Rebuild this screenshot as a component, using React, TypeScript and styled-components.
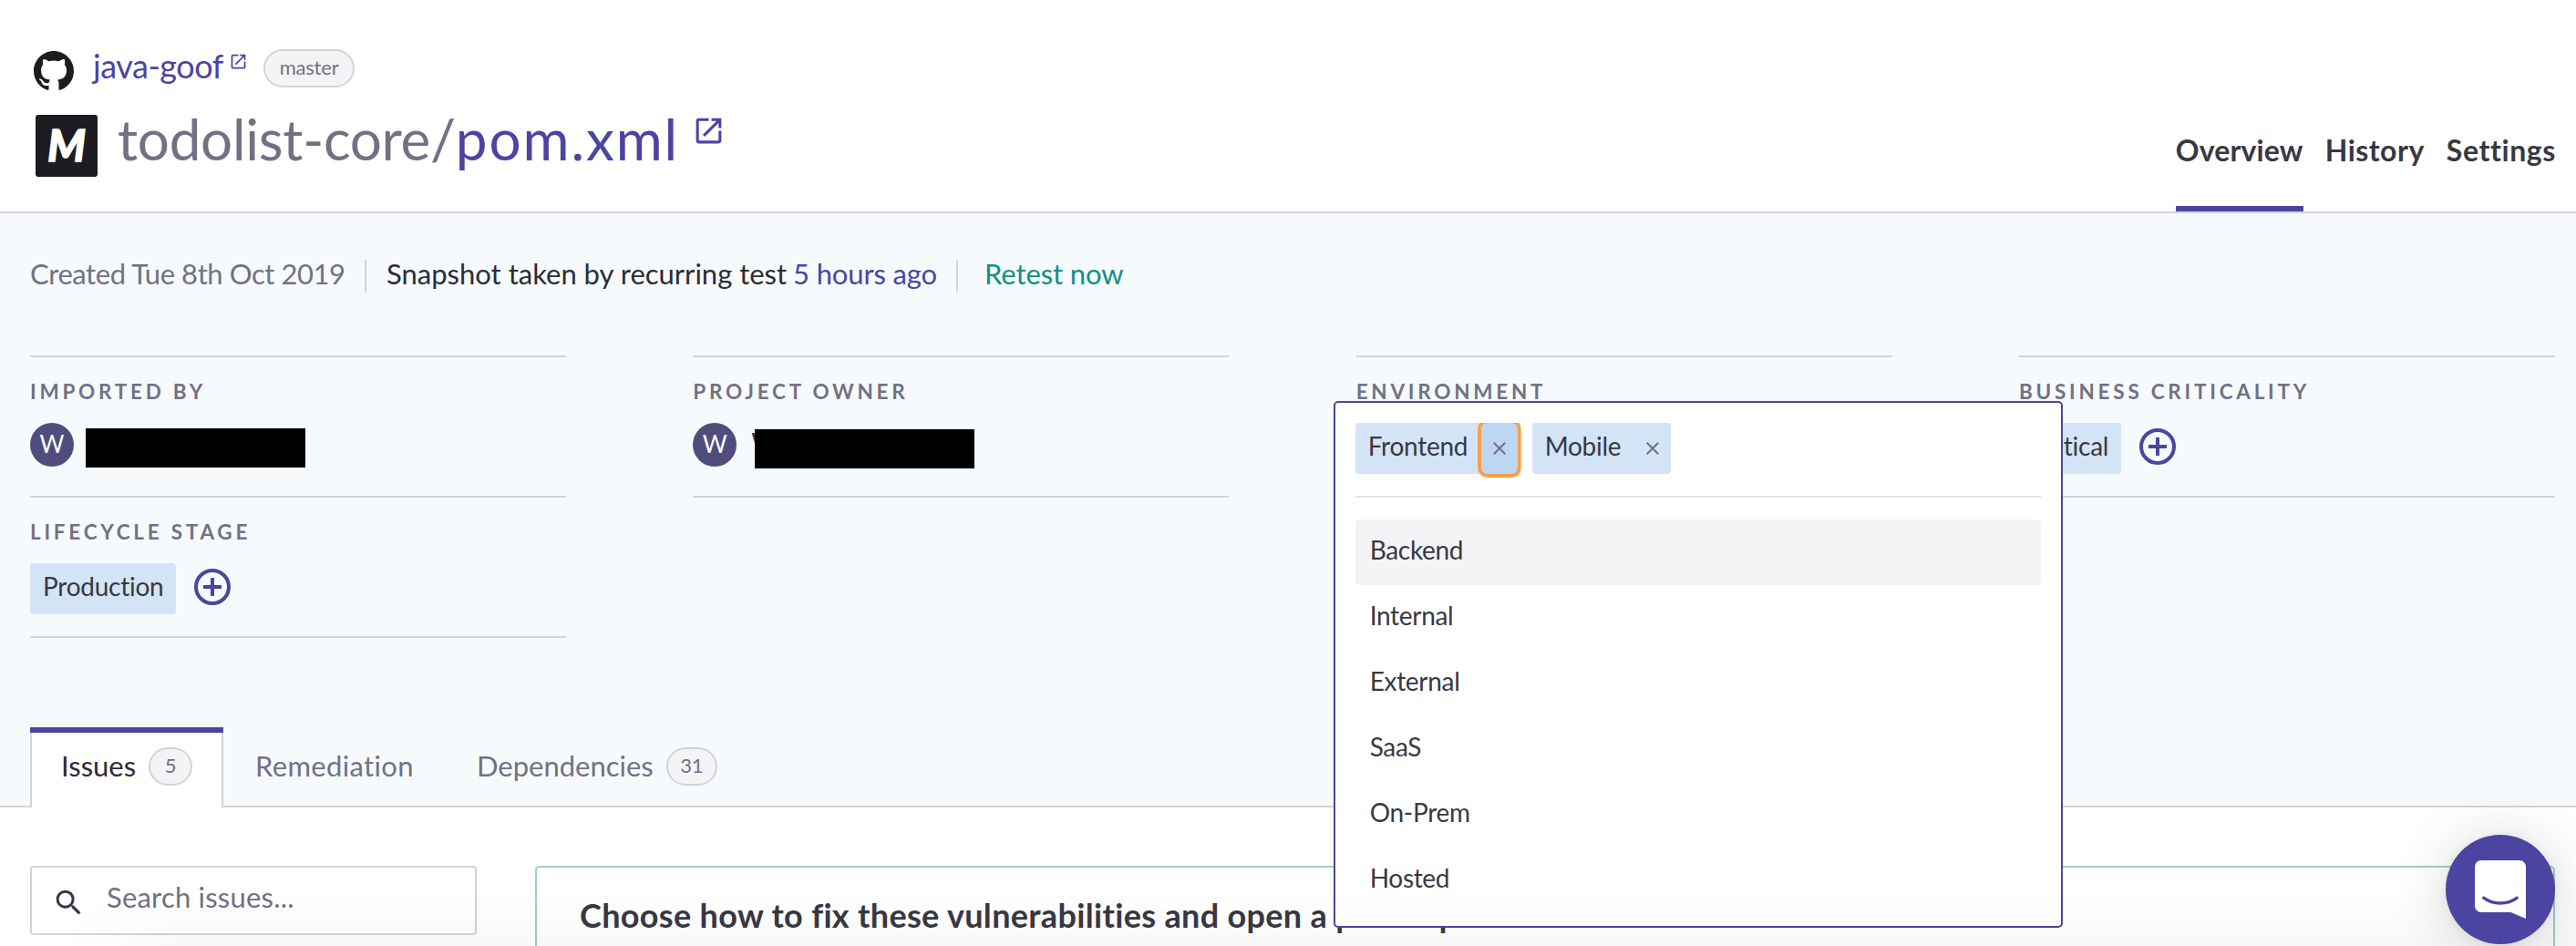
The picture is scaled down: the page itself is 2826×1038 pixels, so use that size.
import React from "react";
import styled, { createGlobalStyle } from "styled-components";
import { MdOpenInNew, MdSearch } from "react-icons/md";

const color = {
  brand: "#4b45a1",
  ink: "#393842",
  muted: "#727184",
  line: "#d3d3d9",
  panel: "#f6fafd",
  chip: "#d3e4f6",
  teal: "#0f8f87",
};

const GlobalStyle = createGlobalStyle`
  *, *::before, *::after { box-sizing: border-box; }
  html, body { margin: 0; background: #fff; }
  body { font-family: Lato, "Open Sans", sans-serif; color: ${color.ink}; }
`;

const Page = styled.div`
  position: relative;
  display: flex;
  flex-direction: column;
  height: 1038px;
  overflow: hidden;
  background: #fff;
`;

/* ---------- header ---------- */

const Header = styled.header`
  display: flex;
  justify-content: space-between;
  flex: none;
  height: 234px;
  padding: 54px 22px 0 37px;
  border-bottom: 2px solid ${color.line};
`;

const Titles = styled.div`
  display: flex;
  flex-direction: column;
  gap: 24px;
`;

const RepoRow = styled.div`
  display: flex;
  align-items: flex-start;
  height: 42px;
`;

const GithubMark = styled.svg`
  display: block;
  width: 44px;
  height: 44px;
  margin: 2px 21px 0 0;
  fill: #1d1c21;
`;

const RepoLink = styled.a`
  font-size: 36px;
  line-height: 37px;
  letter-spacing: -0.45px;
  color: ${color.brand};
`;

const SmallExternal = styled(MdOpenInNew)`
  width: 21px;
  height: 21px;
  margin: 3px 17px 0 6px;
  color: ${color.brand};
`;

const Badge = styled.span<{ $width: number }>`
  display: block;
  width: ${(p) => p.$width}px;
  height: 42px;
  border: 2px solid ${color.line};
  border-radius: 21px;
  background: #f4f4f6;
  color: ${color.muted};
  font-size: 22px;
  line-height: 35px;
  letter-spacing: -0.2px;
  text-align: center;
`;

const TitleRow = styled.div`
  display: flex;
  align-items: flex-start;
  padding-left: 2px;
`;

const MavenLogo = styled.div`
  width: 68px;
  height: 68px;
  margin: 6px 22px 0 0;
  border-radius: 3px;
  background: #1d1c21;
  color: #fff;
  font-size: 47px;
  font-style: italic;
  font-weight: 900;
  line-height: 66px;
  text-align: center;
  -webkit-text-stroke: 1.5px #fff;
`;

const Title = styled.h1`
  margin: 0;
  font-size: 62px;
  font-weight: 400;
  line-height: 64px;
  letter-spacing: -0.3px;
  color: ${color.muted};
`;

const FileName = styled.a`
  letter-spacing: 1.9px;
  color: ${color.brand};
`;

const LargeExternal = styled(MdOpenInNew)`
  width: 37px;
  height: 37px;
  margin: 5px 0 0 14px;
  color: ${color.brand};
`;

const Nav = styled.nav`
  display: flex;
  align-items: flex-end;
  gap: 24px;
`;

const NavItem = styled.a<{ $active?: boolean; $tracking: number }>`
  padding-bottom: 41px;
  border-bottom: 6px solid ${(p) => (p.$active ? color.brand : "transparent")};
  font-size: 32px;
  font-weight: 700;
  line-height: 40px;
  letter-spacing: ${(p) => p.$tracking}px;
`;

/* ---------- project summary ---------- */

const Summary = styled.section`
  display: flex;
  flex-direction: column;
  flex: none;
  height: 652px;
  padding-top: 51px;
  background: ${color.panel};
`;

const MetaRow = styled.div`
  display: flex;
  height: 36px;
  margin-left: 33px;
  font-size: 31px;
  line-height: 30px;
  white-space: pre;
`;

const Created = styled.span`
  width: 367px;
  color: ${color.muted};
  letter-spacing: -0.43px;
`;

const Snapshot = styled.span`
  width: 649px;
  padding-left: 22px;
  border-left: 2px solid ${color.line};
  color: #2d2c35;
`;

const TimeLink = styled.a`
  margin-left: -1px;
  letter-spacing: -0.15px;
  color: ${color.brand};
`;

const Retest = styled.a`
  padding-left: 29px;
  letter-spacing: -0.1px;
  border-left: 2px solid ${color.line};
  color: ${color.teal};
`;

const Attributes = styled.div`
  display: grid;
  grid-template-columns: repeat(4, 588px);
  grid-auto-rows: 154px;
  justify-content: space-between;
  margin: 69px 23px 0 33px;
`;

const Attribute = styled.div`
  position: relative;
  height: 156px;
  padding-top: 25px;
  border-top: 2px solid ${color.line};
  border-bottom: 2px solid ${color.line};
`;

const Label = styled.div`
  font-size: 22.5px;
  font-weight: 700;
  line-height: 25px;
  letter-spacing: 3.75px;
  color: ${color.muted};
  text-transform: uppercase;
  white-space: nowrap;
`;

const Value = styled.div`
  display: flex;
  align-items: flex-start;
  margin-top: 22px;
`;

const Avatar = styled.div`
  width: 48px;
  height: 48px;
  border-radius: 50%;
  background: #514c7e;
  color: #fff;
  font-size: 26px;
  line-height: 47px;
  text-align: center;
`;

const Person = styled.div<{ $gap: number; $top: number }>`
  position: relative;
  height: 43px;
  margin: ${(p) => p.$top}px 0 0 ${(p) => p.$gap}px;
  font-size: 28px;
  line-height: 28px;
`;

const Redaction = styled.div<{ $inset: number }>`
  position: absolute;
  top: 0;
  left: ${(p) => p.$inset}px;
  width: 241px;
  height: 43px;
  background: #000;
`;

const Chip = styled.div<{ $width: number }>`
  display: flex;
  justify-content: space-between;
  width: ${(p) => p.$width}px;
  height: 56px;
  padding-left: 14px;
  border-radius: 4px;
  background: ${color.chip};
  font-size: 28px;
  line-height: 51px;
  letter-spacing: -0.25px;
`;

const AddButton = styled.svg`
  display: block;
  width: 40px;
  height: 40px;
  margin: 6px 0 0 20px;
  fill: none;
  stroke: ${color.brand};
  stroke-width: 4;
`;

/* ---------- environment menu ---------- */

const Menu = styled.div`
  position: absolute;
  z-index: 2;
  top: 48px;
  left: -25px;
  width: 800px;
  height: 578px;
  padding: 22px;
  border: 2px solid ${color.brand};
  border-radius: 5px;
  background: #fff;
`;

const Selected = styled.div`
  display: flex;
  gap: 16px;
  height: 82px;
  border-bottom: 2px solid #e4e4ea;
`;

const Remove = styled.button<{ $focused?: boolean }>`
  display: flex;
  align-items: center;
  justify-content: center;
  width: 40px;
  height: 56px;
  padding: 0;
  border: 0;
  border-radius: ${(p) => (p.$focused ? 7 : 0)}px;
  background: ${(p) => (p.$focused ? "#bcd6f4" : "transparent")};
  box-shadow: ${(p) => (p.$focused ? "0 0 0 4px #f8a045" : "none")};
  clip-path: inset(0 -4px -4px -4px);
`;

const Cross = styled.svg`
  display: block;
  width: 14px;
  height: 14px;
  stroke: ${color.muted};
  stroke-width: 2;
`;

const Options = styled.div`
  padding-top: 24px;
`;

const Option = styled.div<{ $active?: boolean }>`
  height: 72px;
  padding-left: 16px;
  border-radius: 4px;
  background: ${(p) => (p.$active ? "#f4f4f6" : "transparent")};
  font-size: 28px;
  line-height: 67px;
  letter-spacing: -0.3px;
`;

/* ---------- tabs ---------- */

const Tabs = styled.div`
  display: flex;
  height: 88px;
  margin-top: 100px;
  padding-left: 33px;
  border-bottom: 2px solid ${color.line};
`;

const Tab = styled.div<{ $tracking: number }>`
  display: flex;
  gap: 14px;
  height: 88px;
  padding: 22px 34px 0 35px;
  color: ${color.muted};
  font-size: 31px;
  line-height: 40px;
  letter-spacing: ${(p) => p.$tracking}px;
`;

const ActiveTab = styled.div`
  display: flex;
  flex-direction: column;
  width: 212px;
  height: 88px;
  border-top: 6px solid ${color.brand};
`;

const ActiveTabBody = styled.div`
  display: flex;
  justify-content: space-between;
  flex: 1;
  padding: 16px 32px 0 32px;
  border: solid ${color.line};
  border-width: 0 2px;
  background: #fff;
  color: #2d2c35;
  font-size: 31px;
  line-height: 40px;
`;

/* ---------- content ---------- */

const Content = styled.main`
  display: flex;
  align-items: flex-start;
  gap: 64px;
  padding: 64px 23px 0 33px;
`;

const SearchBox = styled.div`
  display: flex;
  flex: none;
  width: 490px;
  height: 76px;
  border: 2px solid ${color.line};
  border-radius: 4px;
  color: ${color.muted};
  font-size: 31px;
  line-height: 64px;
  letter-spacing: 0.2px;
`;

const SearchIcon = styled(MdSearch)`
  width: 37px;
  height: 37px;
  margin: 20px 23px 0 22px;
  color: ${color.ink};
`;

const FixCard = styled.section`
  flex: 1;
  height: 200px;
  padding: 32px 47px;
  border: 2px solid #9dd0ce;
  border-radius: 5px;
`;

const FixTitle = styled.h2`
  margin: 0;
  font-size: 36px;
  font-weight: 700;
  line-height: 40px;
  letter-spacing: 0.33px;
`;

const BottomShade = styled.div`
  position: absolute;
  z-index: 3;
  right: 0;
  bottom: 0;
  left: 70px;
  height: 60px;
  background: linear-gradient(to bottom, rgba(0, 0, 0, 0), rgba(0, 0, 0, 0.026));
  mask-image: linear-gradient(to right, transparent, #000 130px);
  pointer-events: none;
`;

const Launcher = styled.button`
  position: absolute;
  z-index: 4;
  right: 23px;
  bottom: 2px;
  display: flex;
  align-items: flex-start;
  justify-content: center;
  width: 120px;
  height: 120px;
  padding: 28px 0 0;
  border: 0;
  border-radius: 50%;
  background: ${color.brand};
  box-shadow: 0 2px 12px rgba(0, 0, 0, 0.06), 0 4px 64px rgba(0, 0, 0, 0.16);
`;

const LauncherIcon = styled.svg`
  display: block;
  width: 56px;
  height: 64px;
`;

const Plus = () => (
  <AddButton viewBox="0 0 40 40">
    <circle cx="20" cy="20" r="18" />
    <path d="M20 10v20M10 20h20" />
  </AddButton>
);

const RemoveChip = ({ focused }: { focused?: boolean }) => (
  <Remove $focused={focused} aria-label="Remove">
    <Cross viewBox="0 0 14 14">
      <path d="M.7.7l12.6 12.6M13.3.7.7 13.3" />
    </Cross>
  </Remove>
);

const options = ["Backend", "Internal", "External", "SaaS", "On-Prem", "Hosted"];

export default function App() {
  return (
    <Page>
      <GlobalStyle />
      <Header>
        <Titles>
          <RepoRow>
            <GithubMark viewBox="0 0 16 16">
              <path d="M8 0C3.58 0 0 3.58 0 8c0 3.54 2.29 6.53 5.47 7.59.4.07.55-.17.55-.38 0-.19-.01-.82-.01-1.49-2.01.37-2.53-.49-2.69-.94-.09-.23-.48-.94-.82-1.13-.28-.15-.68-.52-.01-.53.63-.01 1.08.58 1.23.82.72 1.21 1.87.87 2.33.66.07-.52.28-.87.51-1.07-1.78-.2-3.64-.89-3.64-3.95 0-.87.31-1.59.82-2.15-.08-.2-.36-1.02.08-2.12 0 0 .67-.21 2.2.82.64-.18 1.32-.27 2-.27s1.36.09 2 .27c1.53-1.04 2.2-.82 2.2-.82.44 1.1.16 1.92.08 2.12.51.56.82 1.27.82 2.15 0 3.07-1.87 3.75-3.65 3.95.29.25.54.73.54 1.48 0 1.07-.01 1.93-.01 2.2 0 .21.15.46.55.38A8.01 8.01 0 0 0 16 8c0-4.42-3.58-8-8-8z" />
            </GithubMark>
            <RepoLink>java-goof</RepoLink>
            <SmallExternal />
            <Badge $width={100}>master</Badge>
          </RepoRow>
          <TitleRow>
            <MavenLogo>M</MavenLogo>
            <Title>
              todolist-core/<FileName>pom.xml</FileName>
            </Title>
            <LargeExternal />
          </TitleRow>
        </Titles>
        <Nav>
          <NavItem $active $tracking={0.15}>Overview</NavItem>
          <NavItem $tracking={0.5}>History</NavItem>
          <NavItem $tracking={0.6}>Settings</NavItem>
        </Nav>
      </Header>

      <Summary>
        <MetaRow>
          <Created>Created Tue 8th Oct 2019</Created>
          <Snapshot>
            Snapshot taken by recurring test <TimeLink>5 hours ago</TimeLink>
          </Snapshot>
          <Retest>Retest now</Retest>
        </MetaRow>

        <Attributes>
          <Attribute>
            <Label>Imported by</Label>
            <Value>
              <Avatar>W</Avatar>
              <Person $gap={13} $top={6}>
                <Redaction $inset={0} />
              </Person>
            </Value>
          </Attribute>
          <Attribute>
            <Label>Project owner</Label>
            <Value>
              <Avatar>W</Avatar>
              <Person $gap={16} $top={7}>
                W
                <Redaction $inset={4} />
              </Person>
            </Value>
          </Attribute>
          <Attribute>
            <Label>Environment</Label>
            <Menu>
              <Selected>
                <Chip $width={178}>
                  Frontend
                  <RemoveChip focused />
                </Chip>
                <Chip $width={152}>
                  Mobile
                  <RemoveChip />
                </Chip>
              </Selected>
              <Options>
                {options.map((name, i) => (
                  <Option key={name} $active={i === 0}>
                    {name}
                  </Option>
                ))}
              </Options>
            </Menu>
          </Attribute>
          <Attribute>
            <Label>Business criticality</Label>
            <Value>
              <Chip $width={112}>Critical</Chip>
              <Plus />
            </Value>
          </Attribute>
          <Attribute>
            <Label>Lifecycle stage</Label>
            <Value>
              <Chip $width={160}>Production</Chip>
              <Plus />
            </Value>
          </Attribute>
        </Attributes>

        <Tabs>
          <ActiveTab>
            <ActiveTabBody>
              Issues
              <Badge $width={48}>5</Badge>
            </ActiveTabBody>
          </ActiveTab>
          <Tab $tracking={0.35}>Remediation</Tab>
          <Tab $tracking={0}>
            Dependencies
            <Badge $width={56}>31</Badge>
          </Tab>
        </Tabs>
      </Summary>

      <Content>
        <SearchBox>
          <SearchIcon />
          Search issues...
        </SearchBox>
        <FixCard>
          <FixTitle>Choose how to fix these vulnerabilities and open a pull request</FixTitle>
        </FixCard>
      </Content>

      <BottomShade />
      <Launcher aria-label="Open chat">
        <LauncherIcon viewBox="0 0 56 64">
          <path
            fill="#fff"
            d="M7 0h42a7 7 0 0 1 7 7v57l-16.500-7H7a7 7 0 0 1-7-7V7a7 7 0 0 1 7-7z"
          />
          <path
            d="M9.700 41.200C20 49 36 49 46.300 41.200"
            fill="none"
            stroke="#4b45a1"
            strokeWidth="3.400"
            strokeLinecap="round"
          />
        </LauncherIcon>
      </Launcher>
    </Page>
  );
}
